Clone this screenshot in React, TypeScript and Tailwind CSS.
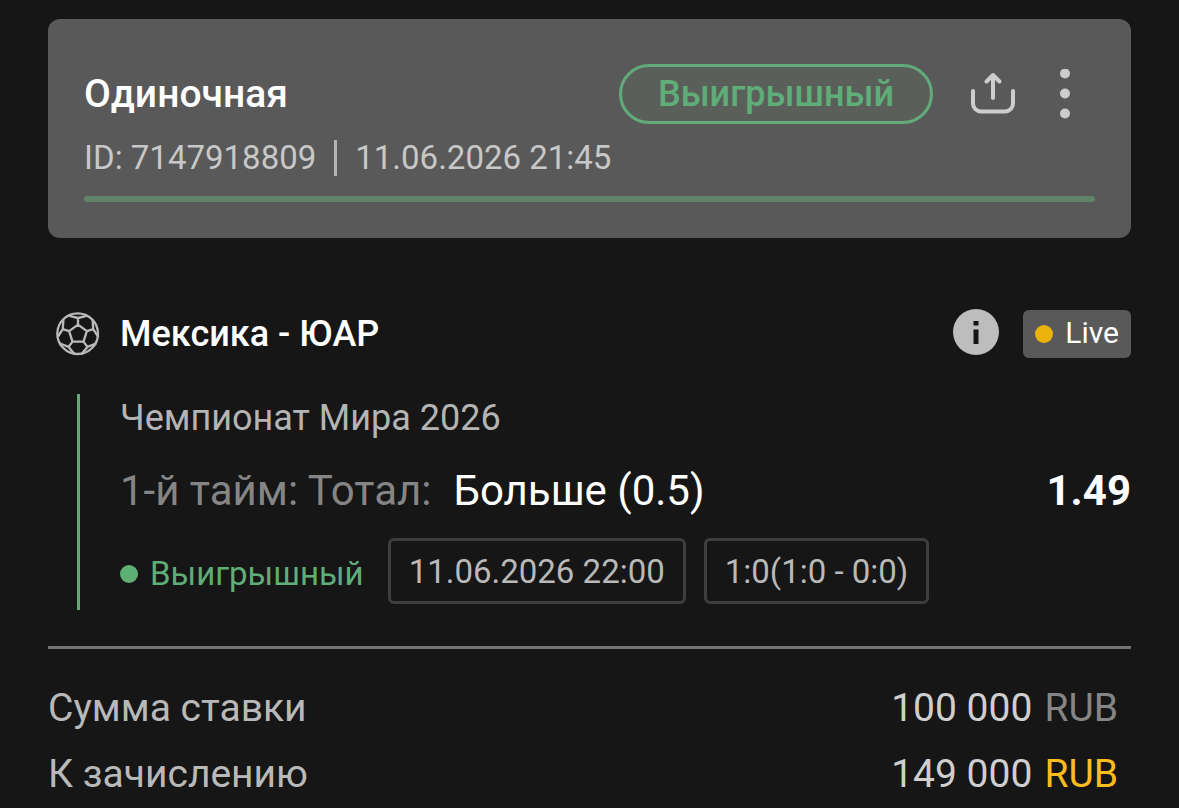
import React from "react";

function ShareIcon() {
  return (
    <svg viewBox="0 0 44 44" className="h-11 w-11" fill="none" stroke="currentColor" strokeWidth="4" strokeLinecap="round" strokeLinejoin="round" aria-hidden="true">
      <path d="M2 19v12.500a8 8 0 0 0 8 8h24a8 8 0 0 0 8-8V19" />
      <path d="M22 26V3M15.500 9.500 22 3l6.500 6.500" />
    </svg>
  );
}

function MoreIcon() {
  return (
    <svg viewBox="0 0 10 50" className="h-[50px] w-[10px]" fill="currentColor" aria-hidden="true">
      <circle cx="5" cy="4.500" r="5" />
      <circle cx="5" cy="24.500" r="5" />
      <circle cx="5" cy="44.500" r="5" />
    </svg>
  );
}

function at(radius: number, degrees: number) {
  const a = (degrees * Math.PI) / 180;
  return `${(66 + radius * Math.cos(a)).toFixed(1)} ${(66 + radius * Math.sin(a)).toFixed(1)}`;
}

const seams = [0, 1, 2, 3, 4]
  .map((k) => {
    const a = -90 + 72 * k;
    return [
      `M${at(28, a)}L${at(28, a + 72)}`,
      `M${at(28, a)}L${at(48, a)}`,
      `M${at(62, a - 27)}L${at(55, a - 18)}L${at(48, a)}L${at(55, a + 18)}L${at(62, a + 27)}`,
    ].join("");
  })
  .join("");

function BallIcon() {
  return (
    <svg viewBox="0 0 132 132" className="h-11 w-11 shrink-0" fill="none" stroke="currentColor" strokeWidth="7" strokeLinejoin="round" aria-hidden="true">
      <circle cx="65" cy="65" r="61" />
      <path d={seams} />
    </svg>
  );
}

function InfoIcon() {
  return (
    <svg viewBox="0 0 46 46" className="h-[46px] w-[46px]" aria-hidden="true">
      <circle cx="23" cy="23" r="23" fill="#bdbdbd" />
      <path d="M20.500 12h5v4.500h-5zM20.500 20.500h5V35h-5z" fill="#161616" />
    </svg>
  );
}

function Amount({ label, value, currencyClass }: { label: string; value: string; currencyClass: string }) {
  return (
    <div className="flex items-center justify-between pr-[13px] text-[39px] leading-[66px]">
      <dt className="text-[#b9b9b9]">{label}</dt>
      <dd className="flex gap-3 text-[#cfcfcf]">
        {value}
        <span className={currencyClass}>RUB</span>
      </dd>
    </div>
  );
}

export default function App() {
  return (
    <main className="min-h-screen bg-[#161616] px-12 pt-[19px] font-['Roboto',sans-serif]">
      <header className="rounded-xl bg-[#595959] px-9 pt-[45px] pb-9">
        <div className="flex h-[60px] items-center">
          <h1 className="flex-1 text-[39px] font-medium text-white">Одиночная</h1>
          <span className="flex h-[60px] items-center rounded-full border-3 border-[#61ab7b] bg-[#5a6059] px-9 text-[36px] font-medium text-[#5fad78]">
            Выигрышный
          </span>
          <button type="button" aria-label="Поделиться" className="ml-9 flex h-12 w-12 items-center justify-center text-[#cdcdcd]">
            <ShareIcon />
          </button>
          <button type="button" aria-label="Ещё" className="ml-[18px] flex h-[60px] w-[60px] items-center justify-center text-[#cdcdcd]">
            <MoreIcon />
          </button>
        </div>
        <div className="mt-3 flex items-center gap-[18px] text-[33px] leading-[44px] text-[#c8c8c8]">
          <span>ID: 7147918809</span>
          <span className="h-9 w-[3px] bg-[#b4b4b4]" />
          <time>11.06.2026 21:45</time>
        </div>
        <div className="mt-4 h-[6px] rounded-full bg-[#618468]" />
      </header>

      <section>
        <div className="mt-[72px] flex h-12 items-center pl-2 text-[#b9b9b9]">
          <BallIcon />
          <h2 className="ml-5 flex-1 text-[36px] font-medium text-white">Мексика - ЮАР</h2>
          <button type="button" aria-label="Информация" className="mr-6 pb-1">
            <InfoIcon />
          </button>
          <span className="flex h-12 items-center gap-3 rounded-md bg-[#595959] px-3 text-[30px] text-white">
            <span className="h-[18px] w-[18px] rounded-full bg-[#edb30d]" />
            <span className="pb-[3px]">Live</span>
          </span>
        </div>

        <div className="mt-9 ml-[29px] border-l-3 border-[#65a878] pb-[6px] pl-10">
          <p className="text-[36px] leading-[48px] text-[#b4b4b4]">Чемпионат Мира 2026</p>
          <div className="mt-5 flex items-center justify-between text-[42px] leading-[58px]">
            <p className="flex gap-[22px] text-white">
              <span className="text-[#858585]">1-й тайм: Тотал:</span>
              Больше (0.5)
            </p>
            <strong className="font-bold text-white">1.49</strong>
          </div>
          <div className="mt-[18px] flex h-[66px] items-center gap-[18px] text-[33px] text-[#b9b9b9]">
            <span className="mr-[6px] flex items-center gap-3 pt-[6px] text-[#5fad78]">
              <span className="h-[18px] w-[18px] rounded-full bg-[#5fb074]" />
              Выигрышный
            </span>
            <time className="flex h-full items-center rounded-md border-3 border-[#3e3e3e] px-[18px] pt-[2px]">11.06.2026 22:00</time>
            <span className="flex h-full items-center rounded-md border-3 border-[#3e3e3e] px-[18px] pt-[2px]">1:0(1:0 - 0:0)</span>
          </div>
        </div>
      </section>

      <dl className="mt-9 border-t-3 border-[#727272] pt-[26px]">
        <Amount label="Сумма ставки" value="100 000" currencyClass="text-[#858585]" />
        <Amount label="К зачислению" value="149 000" currencyClass="text-[#fbbc1e]" />
      </dl>
    </main>
  );
}
